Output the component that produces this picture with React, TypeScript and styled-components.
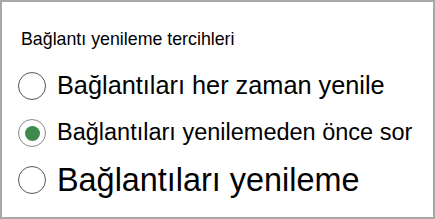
import styled, { createGlobalStyle } from "styled-components";

const GlobalStyle = createGlobalStyle`
  html, body {
    margin: 0;
    padding: 0;
    background: #ffffff;
  }
`;

const Panel = styled.div`
  box-sizing: border-box;
  width: 435px;
  height: 219px;
  border: 2px solid #a8a8a8;
  padding: 27px 0 0 16px;
  font-family: "Liberation Sans", Arial, sans-serif;
  color: #000;
  display: flex;
  flex-direction: column;
`;

const Title = styled.div`
  font-size: 17.8px;
  line-height: 20px;
  margin-left: 3px;
  margin-bottom: 20px;
`;

const OptionList = styled.div`
  display: flex;
  flex-direction: column;
  gap: 13px;
`;

const Option = styled.label`
  display: flex;
  align-items: center;
  gap: 11px;
  height: 34px;
  cursor: pointer;
`;

const Radio = styled.span<{ $checked: boolean }>`
  box-sizing: border-box;
  flex: none;
  width: 28px;
  height: 28px;
  border-radius: 50%;
  border: 1.5px solid ${(p) => (p.$checked ? "#8a8a8a" : "#555555")};
  display: flex;
  align-items: center;
  justify-content: center;

  &::after {
    content: "";
    display: ${(p) => (p.$checked ? "block" : "none")};
    width: 15px;
    height: 15px;
    border-radius: 50%;
    background: #3d8a4c;
  }
`;

const OptionText = styled.span<{ $size: number }>`
  font-size: ${(p) => p.$size}px;
  line-height: 1;
  white-space: nowrap;
`;

type Choice = { label: string; size: number; checked: boolean };

const choices: Choice[] = [
  { label: "Bağlantıları her zaman yenile", size: 25.3, checked: false },
  { label: "Bağlantıları yenilemeden önce sor", size: 23.5, checked: true },
  { label: "Bağlantıları yenileme", size: 32.4, checked: false },
];

export default function App() {
  return (
    <>
      <GlobalStyle />
      <Panel>
        <Title>Bağlantı yenileme tercihleri</Title>
        <OptionList>
          {choices.map((c) => (
            <Option key={c.label}>
              <Radio $checked={c.checked} />
              <OptionText $size={c.size}>{c.label}</OptionText>
            </Option>
          ))}
        </OptionList>
      </Panel>
    </>
  );
}
